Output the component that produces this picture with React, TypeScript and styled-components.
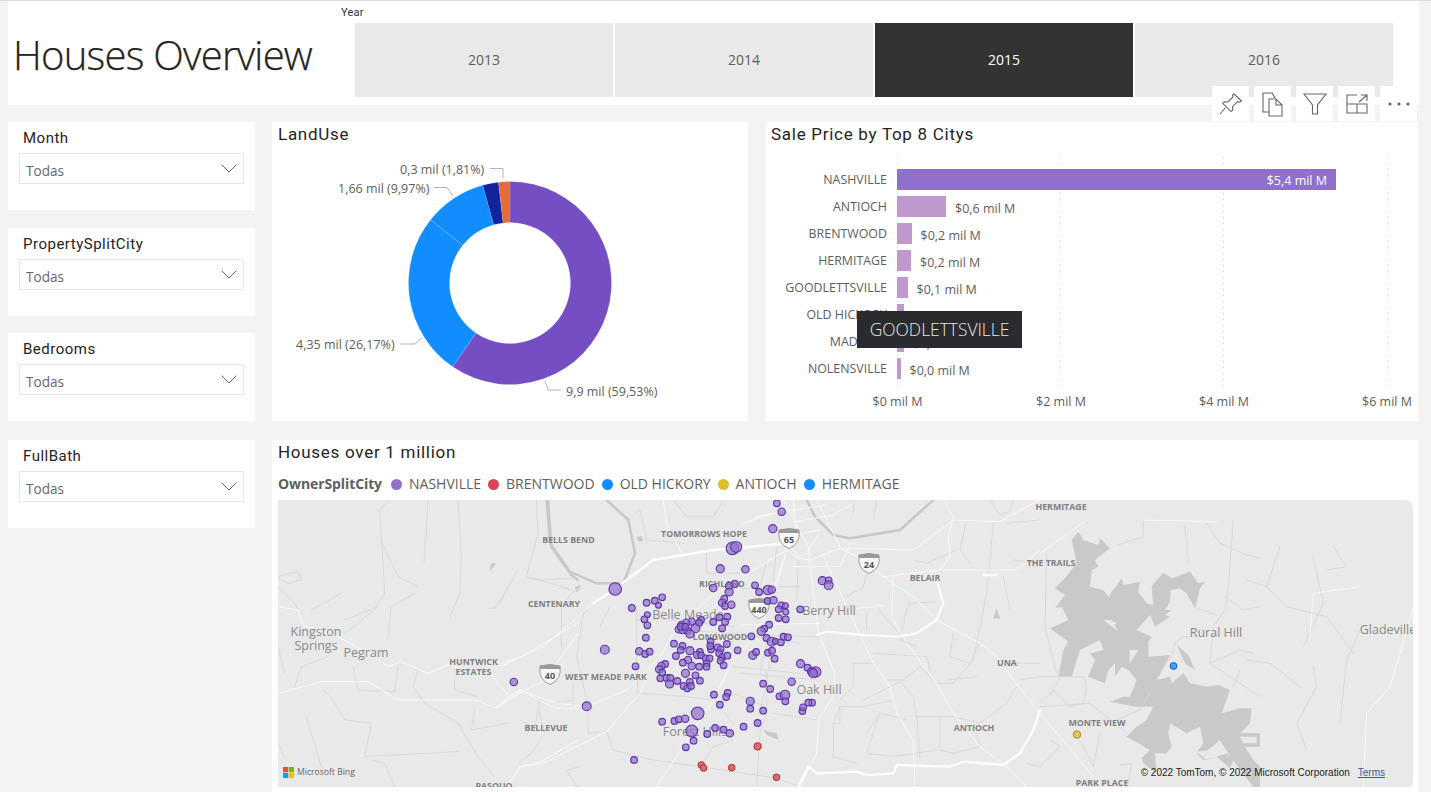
import React from 'react';
import styled, { createGlobalStyle } from 'styled-components';

const Global = createGlobalStyle`
  html, body { margin: 0; padding: 0; background: #f3f3f3; }
  body { width: 1431px; height: 792px; overflow: hidden; font-family: "Open Sans", "Liberation Sans", sans-serif; }
`;

const Page = styled.div`
  width: 1431px; height: 792px; box-sizing: border-box; overflow: hidden;
  border-top: 1px solid #dcdcdc; padding-left: 8px; background: #f3f3f3;
  display: flex; flex-direction: column; gap: 17px;
`;
const Header = styled.header`
  width: 1411px; height: 104px; background: #fff; flex: none;
  display: flex; box-sizing: border-box; position: relative;
`;
const Title = styled.h1`
  margin: 29px 0 0 5px; width: 342px; font: 300 40px/50px "Open Sans", sans-serif; color: #252423; letter-spacing: -0.75px; white-space: nowrap; -webkit-text-stroke: .25px #252423;
`;
const YearBlock = styled.div`display: flex; flex-direction: column; margin-top: 4px;`;
const YearLabel = styled.div`font: 400 11px/15px "Roboto", sans-serif; color: #333; margin-left: -14px; height: 18px; letter-spacing: .2px;`;
const YearRow = styled.div`display: flex; gap: 2px;`;
const YearTile = styled.div<{ $on?: boolean }>`
  width: 258px; height: 74px; box-sizing: border-box; padding-top: 27px; text-align: center;
  font: 400 14px/20px "Open Sans", sans-serif;
  background: ${p => (p.$on ? '#333333' : '#e9e9e9')};
  color: ${p => (p.$on ? '#fff' : '#605e5c')};
`;
const Body = styled.div`display: flex; gap: 17px; flex: 1;`;
const FilterCol = styled.div`width: 247px; display: flex; flex-direction: column; flex: none;`;
const FilterCard = styled.div<{ $after: number }>`
  height: 88px; background: #fff; flex: none; margin-bottom: ${p => p.$after}px; box-sizing: border-box; padding: 7px 11px 0;
`;
const FilterTitle = styled.div`font: 400 15px/18px "Roboto", sans-serif; color: #252423; margin-left: 4px; letter-spacing: .5px;`;
const Drop = styled.div`
  margin-top: 6px; height: 31px; box-sizing: border-box; border: 1px solid #e6e6e6; padding: 4px 6px 0;
  display: flex; align-items: center; justify-content: space-between;
  font: 400 13.6px/20px "Open Sans", sans-serif; color: #666;
`;
const ChevronSvg = styled.svg`margin-top: -5px;`;
const Main = styled.div`width: 1146px; display: flex; flex-direction: column; gap: 19px; flex: none;`;
const TopRow = styled.div`display: flex; gap: 18px; height: 299px; flex: none;`;
const Card = styled.section<{ $w: number }>`
  width: ${p => p.$w}px; height: 100%; background: #fff; position: relative; flex: none; box-sizing: border-box; padding: 2px 6px 0 ${p => (p.$w > 500 ? 5 : 6)}px;
`;
const CardTitle = styled.h2`margin: 0; font: 400 17px/20px "Roboto", sans-serif; letter-spacing: .72px; color: #252423;`;
const ChartSvg = styled.svg`position: absolute; left: 0; top: 0;`;
const Rows = styled.div`margin-top: 25px; display: flex; flex-direction: column; gap: 6px; position: relative;`;
const Row = styled.div`display: flex; height: 21px; align-items: center;`;
const RowLabel = styled.div`width: 126px; padding-right: 10px; box-sizing: border-box; text-align: right; font: 400 12.4px/14px "Open Sans", sans-serif; color: #605e5c; white-space: nowrap;`;
const Bar = styled.div<{ $main?: boolean }>`
  height: 21px; background: ${p => (p.$main ? '#9170cb' : '#c198cd')}; position: relative; flex: none;
  display: flex; align-items: center; justify-content: flex-end; box-sizing: border-box;
`;
const InnerValue = styled.span`color: #fff; font: 400 12.5px/14px "Open Sans", sans-serif; margin: 3px 9px 0 0;`;
const Value = styled.span`margin-left: 9px; color: #605e5c; font: 400 12.5px/14px "Open Sans", sans-serif; margin-top: 4px; white-space: nowrap;`;
const Grid = styled.div<{ $x: number }>`
  position: absolute; left: ${p => p.$x}px; top: -12px; height: 233px; width: 1px;
  background: repeating-linear-gradient(to bottom, #cfcfcf 0 1px, transparent 1px 6px);
`;
const Axis = styled.div`margin: 15px 0 0 92px; position: relative; height: 18px; width: 560px;`;
const Tick = styled.span<{ $x: number }>`
  position: absolute; left: ${p => p.$x}px; transform: translateX(-50%); top: 0;
  font: 400 12.5px/16px "Open Sans", sans-serif; color: #605e5c; white-space: nowrap;
`;
const Tooltip = styled.div`
  position: absolute; left: 91px; top: 189px; width: 165px; height: 37px; background: #2a2b2e; color: #e6e6e6;
  font: 300 17.4px/37px "Open Sans", sans-serif; text-align: center; z-index: 3;
`;
const Toolbar = styled.div`position: absolute; right: 1px; top: -36px; display: flex; gap: 5px; z-index: 4;`;
const ToolBtn = styled.div`width: 37px; height: 35px; background: #fff; display: flex; align-items: center; justify-content: center; color: #666;`;
const MapCard = styled.section`
  height: 352px; background: #fff; box-sizing: border-box; padding: 2px 6px 5px; width: 1146px; flex: none;
`;
const Legend = styled.div`display: flex; align-items: center; height: 20px; margin-top: 12px; margin-bottom: 6px; font: 400 14px/20px "Open Sans", sans-serif; color: #605e5c; white-space: nowrap;`;
const LegendTitle = styled.b`font-weight: 700; color: #605e5c; margin-right: 9px; font-size: 14px; letter-spacing: -.1px;`;
const LegendItem = styled.span`display: flex; align-items: center; gap: 7px; margin-right: 7px;`;
const Dot = styled.i<{ $c: string }>`width: 11px; height: 11px; border-radius: 50%; background: ${p => p.$c}; display: block;`;
const MapBox = styled.div`
  width: 1135px; height: 287px; position: relative; overflow: hidden; background: #e9e9e9; border-top-right-radius: 8px; border-bottom-right-radius: 4px;
`;
const MapSvg = styled.svg`display: block;`;
const Bing = styled.div`position: absolute; left: 5px; bottom: 9px; display: flex; align-items: center; gap: 3px; font: 400 8.6px/12px "Open Sans", sans-serif; color: #666;`;
const Attribution = styled.div`position: absolute; right: 28px; bottom: 8px; font: 400 10px/12px "Liberation Sans", sans-serif; color: #222; white-space: nowrap; display: flex; gap: 8px;`;
const Terms = styled.span`color: #3b5aa0; text-decoration: underline;`;

const Chevron = () => (
  <ChevronSvg width="16" height="9" viewBox="0 0 16 9" fill="none" stroke="#666" strokeWidth="1"><path d="M.7.7 8 8l7.3-7.3" /></ChevronSvg>
);

const polar = (a: number, r: number) => {
  const t = (a - 90) * Math.PI / 180;
  return [510 + r * Math.cos(t), 283 + r * Math.sin(t)];
};
const slice = (from: number, to: number) => {
  const [R, r] = [101.5, 60.5];
  const a0 = from * 3.6; const a1 = to * 3.6;
  const big = a1 - a0 > 180 ? 1 : 0;
  const p = [polar(a0, R), polar(a1, R), polar(a1, r), polar(a0, r)].map(q => q.map(n => n.toFixed(2)).join(' '));
  return `M${p[0]}A${R} ${R} 0 ${big} 1 ${p[1]}L${p[2]}A${r} ${r} 0 ${big} 0 ${p[3]}Z`;
};
const slices: [number, number, string][] = [
  [0, 59.53, '#744ec2'], [59.53, 85.7, '#118dff'], [85.7, 95.67, '#118dff'], [95.67, 98.19, '#12239e'], [98.19, 100, '#e66c37'],
];
const donutLabels: [string, number, number, string][] = [
  ['0,3 mil (1,81%)', 400, 173.5, 'M490 168.5H503V178'],
  ['1,66 mil (9,97%)', 338, 192.5, 'M434 187.5H447L453 196'],
  ['4,35 mil (26,17%)', 296, 349, 'M400 344H415L422 338'],
  ['9,9 mil (59,53%)', 566, 395.5, 'M545 381L548 390H561'],
];

const bars = [
  ['NASHVILLE', 439, '$5,4 mil M'], ['ANTIOCH', 49, '$0,6 mil M'], ['BRENTWOOD', 14.5, '$0,2 mil M'], ['HERMITAGE', 14, '$0,2 mil M'],
  ['GOODLETTSVILLE', 10.5, '$0,1 mil M'], ['OLD HICKORY', 6.5, '$0,1 mil M'], ['MADISON', 6.5, '$0,1 mil M'], ['NOLENSVILLE', 3.5, '$0,0 mil M'],
] as [string, number, string][];

const purple: number[][] = [
[1370,190,9],[1383,215,10],[1359,266,11],[1250,325,17],[1260,321,15],[1217,386,11],[1285,388,10],[1198,444,10],[1256,432,10],[1241,438,10],[1241,456,11],[1311,436,9],[1322,456,9],[1346,450,13],[1356,449,10],
[933,447,17],[978,504,9],[1018,488,9],[1040,482,9],[1060,472,9],[1050,496,8],[1020,524,8],[1012,538,9],[1020,556,9],[1016,593,9],
[1228,476,9],[1222,488,10],[1230,498,9],[1247,494,10],[1236,530,9],[1215,532,9],[1230,546,9],[1198,546,9],[1222,565,9],
[1345,483,9],[1361,481,10],[1382,496,9],[1393,497,8],[1375,508,9],[1394,516,8],[1394,538,9],[1375,534,9],[1433,508,9],
[1493,422,11],[1510,421,9],[1510,436,12],
[1140,545,10],[1125,548,10],[1112,555,10],[1165,540,9],[1160,548,9],[1105,568,10],[1115,570,10],[1128,572,9],[1150,565,12],[1135,582,11],[1110,560,9],[1122,560,9],
[1301,589,9],[1349,554,9],[1336,566,9],[1328,574,11],[1342,594,9],[1356,605,12],[1366,604,8],[1381,607,9],[1388,590,9],[1400,592,9],
[1191,605,9],[1235,612,9],[1192,628,9],[1115,618,9],[1092,611,9],[1110,630,9],[1135,632,11],[1162,636,9],[1155,645,10],[1165,646,9],[1097,648,9],[1190,618,9],[1210,622,9],[1218,628,9],[1214,640,9],[1222,652,9],[1236,647,9],[1218,662,9],[1226,676,9],[1264,631,9],[1305,646,11],[1314,636,9],[1346,638,9],[1357,632,9],[1364,656,9],
[1130,660,10],[1116,668,9],[1140,678,10],[1160,680,9],[1178,655,9],[1188,655,9],[1180,670,9],[1180,680,9],
[905,629,12],[998,634,10],[1014,642,9],[1026,635,9],[988,679,9],
[1068,672,9],[1058,678,10],[1052,688,10],[1060,698,9],[1055,715,9],[1072,714,9],[1082,714,9],[1080,732,11],[1101,723,9],[1123,700,11],[1150,706,9],[1135,726,9],[1162,722,9],[1118,738,9],[1128,745,9],[1138,738,9],
[1434,671,11],[1453,683,9],[1465,695,12],[1475,696,14],[1468,700,12],
[1410,725,10],[1333,731,9],[1352,747,9],[1377,769,9],[1392,765,13],[1393,784,9],[1237,759,9],[1233,771,9],[1200,764,9],[1216,794,9],[1298,784,11],[1298,806,9],[1333,812,9],[1439,813,9],[1441,802,9],[1465,788,9],[1455,788,9],
[659,726,10],[856,799,12],[1156,820,17],[1060,845,9],[1093,843,9],[1105,838,9],[1122,836,10],[1140,873,16],[1182,882,9],[1203,864,9],[1226,869,9],[1243,880,10],[1280,860,9],[1318,849,9],[1145,902,9],[1124,922,9],[984,960,9],
];
const red: number[][] = [[1318,919,10],[1166,975,9],[1172,984,9],[1248,983,9],[1369,1012,9]];
const conv = (zx: number, zy: number) => [270 + zx / 2.703, 440 + zy / 3];

type Sheet = { x: number; y: number; grey: string[]; white: string[]; wide?: string[]; river?: string[]; fill?: string[] };
const sheets: Sheet[] = [
  { x: 278, y: 500,
    grey: ['M335 0L305 30L315 180L320 280L290 330L200 400','M450 0L445 100L438 185','M540 0L550 170L545 280L515 355','M310 125L360 230L420 260','M410 280L340 320L330 420','M0 230L60 215L70 240L30 250L0 235','M0 260L50 310L60 330','M190 280L100 330','M300 320L200 360','M775 0L780 100L745 230L790 240L880 235','M720 210L680 280L650 325L630 325','M420 510L405 560L440 610L540 670L600 770L650 830','M590 630L580 690L690 670','M225 500L240 570L350 575L360 500','M135 570L165 600L200 660L280 670L260 770L540 755','M0 440L20 520','M150 470L70 500L50 560','M85 650L130 800','M780 620L800 700L760 760L720 790','M885 550V620','M850 320V440','M530 540L530 570L600 590','M280 780L320 790L350 860','M0 730L20 770'],
    white: ['M0 320L60 330L75 375L180 410L280 465L330 500L370 485L450 520L510 495L640 525L695 590L730 570L800 610L840 625L900 625','M450 520L510 495L670 490L730 470L900 370','M655 620L790 545L835 490L900 400','M0 580L130 545L270 545L360 600L590 600L655 625L730 575','M690 860L725 800L790 785L900 720'],
    river: ['M810 0L820 140L880 225L900 240'],
    fill: ['640,190 655,190 635,215'],
  },
  { x: 500, y: 500,
    grey: ['M280 310L250 340L230 470L265 620L265 700L320 695L340 750L460 780L600 800L830 835L900 860','M410 320V490L415 590','M410 360H540L700 380','M540 390L700 400L900 430','M700 500L900 520','M240 260L215 280L200 300','M80 235L120 240L215 270','M30 250L0 310','M620 160V220L720 220','M120 600L105 680L80 700','M165 610L220 600','M240 800L200 810L230 860','M700 580L800 620V520','M800 640L780 700L770 860','M640 600L700 670','M405 40L420 30L440 120L550 130','M520 0L560 50L640 50L670 0','M60 660L120 690L200 680','M300 380L330 320','M600 800L640 740L700 720','M420 580L560 590L640 600','M800 430L780 520','M700 400L690 500','M900 260L780 260L800 180'],
    white: ['M20 860L60 800L130 790L320 695L420 580L440 530','M470 860L640 600L700 480L780 390L860 150','M490 0L500 70L550 170','M730 70L820 40','M880 0L890 130','M860 150L900 180','M0 610L60 570L170 610L260 620L380 570L480 470L530 380L640 285L720 235L860 150','M0 500L130 440L280 310'],
    wide: ['M280 310L340 270L460 180L640 150L860 130'],
    river: ['M140 0L150 130L210 215L290 250L370 250L405 160L385 60L320 0'],
    fill: ['790,690 830,700 835,720 800,705','410,110 425,108 430,122 415,125','225,260 245,255 230,278'],
  },
  { x: 740, y: 500,
    grey: ['M380 340V390','M410 320L500 430','M500 330L510 310L590 305','M640 400L630 470L690 490L720 430','M760 70L740 280L700 480L640 550L590 550','M340 490V560L300 600','M370 600L480 545L520 590L530 650L640 650L720 670','M300 620H370L460 600','M280 670L300 620','M280 670V770L350 790','M500 660L420 640L380 760L460 770L590 750','M600 650V750L640 760','M340 490H400','M400 460L560 470','M810 490H900','M720 670L800 610L830 560','M710 530L620 540','M900 530L840 540','M790 230L810 330','M750 0L780 45L810 35L820 0','M0 265H90','M240 410L0 405','M0 520L240 540','M100 430L60 640','M230 660L100 640','M110 140L100 240','M175 180L170 300','M380 220L370 260L320 290','M500 330L480 420L530 440','M560 470L570 510','M590 550L540 500L490 540L440 540','M680 60L660 150L690 190','M410 0L400 60','M340 0V40','M650 150L560 190L520 180','M900 60L800 70','M300 620V670L280 670','M530 650L540 780','M700 660L720 740L640 760','M420 640L380 700','M860 790L900 800','M820 180L900 190'],
    white: ['M205 150L235 400L285 520L280 590L235 660L230 760L180 860','M0 150L120 130L150 140','M300 145L520 150L640 60L780 65L860 20L900 0','M300 145L370 180L430 230L520 290L590 360L720 430L770 470L820 540L900 640','M430 230L600 210L830 210L900 150','M610 0L640 50L625 110L630 170L600 210','M250 170L330 340L400 490L450 560L470 640L520 720L525 860','M460 230L455 350L500 430L590 550L640 640L720 740L800 800L860 860','M0 375L240 370','M130 0L210 150','M230 0L300 140','M50 50L120 35L260 15','M20 70L50 50','M170 65L280 45L340 10','M190 100L240 90','M205 150L235 105','M350 325L430 318','M150 140L180 175L210 180L300 145','M135 170L110 260','M160 200H300L330 130'],
    wide: ['M175 860L205 800L230 820L350 815L380 825L460 820L470 795L630 800L670 785L790 795L840 760L880 690L900 630','M230 405L260 395L370 405L470 410L530 400L590 360L610 310L590 240','M730 225L770 225'],
    river: ['M200 0L225 50L280 105L330 115L480 90L580 0'],
    fill: ['770,325 780,355 760,355'],
  },
  { x: 1040, y: 520,
    grey: ['M0 470H130L140 500L130 550L90 560L40 510L0 550','M435 20L445 130','M310 0V50L235 75','M580 0L565 200L555 270L520 320L510 430L660 530','M500 10L540 70L620 105L660 115','M555 230L610 270L660 260','M20 100L15 320L50 460','M405 370L400 395L350 480','M405 370L430 350H450','M180 640L160 740','M0 740L60 680L30 660','M240 735L275 730L265 790','M0 560L150 550L260 640','M60 470L30 530','M230 600L300 570L330 520','M510 430L600 390L640 400','M580 500L600 450','M470 265L530 285','M160 740L130 680L110 650'],
    white: ['M0 580L160 770','M310 0L530 5','M0 100L140 0'],
    wide: [],
    fill: [
      '115,35 130,60 175,75 180,55 210,85 165,120 175,140 155,150 150,200 190,210 205,230 245,175 250,195 300,185 295,215 320,250 340,255 335,200 345,185 370,158 395,175 450,155 475,190 495,185 480,205 465,265 440,220 420,205 392,210 390,245 375,270 395,270 375,285 390,290 345,320 330,285 290,330 335,350 325,365 325,410 390,405 350,480 390,470 395,490 430,460 450,490 500,500 535,495 570,510 545,580 600,565 635,565 630,610 600,640 660,640 660,680 615,680 640,720 660,740 660,801 640,801 575,715 540,660 505,690 470,695 500,720 560,700 580,720 570,745 530,710 490,720 470,700 490,670 480,620 440,640 390,610 385,640 395,680 380,700 345,700 350,760 310,730 305,715 330,690 260,650 290,620 320,600 340,560 290,560 210,545 250,530 270,530 290,480 265,450 245,440 225,470 225,430 205,450 195,490 145,470 165,420 150,400 190,390 180,360 120,390 95,470 55,470 70,390 85,365 30,325 85,300 65,260 45,265 75,225 45,205 70,180 110,130 100,80 95,60',
      '410,375 445,405 465,450 435,430',
    ],
    river: [],
  },
];
const holes = ['190,300 235,335 215,300', '270,390 295,390 268,432', '600,650 650,650 650,670 610,670', '210,300 230,310 215,320'];
const eastGrey = ['M0 100L60 120L120 180L240 210L320 320','M100 0L60 120','M200 30L230 170L170 300','M0 340L70 350L160 420','M340 250L300 340L280 530','M260 0L300 60L240 70','M200 360L210 420L150 530L180 610'];
const eastWhite = ['M20 150L30 20L170 0','M330 60L290 200L260 300L190 380L180 610'];

const smallLabels: [string, number, number][] = [
  ['BELLS BEND', 568.5, 543], ['TOMORROWS HOPE', 704, 536.5], ['RICHLAND', 722, 587], ['CENTENARY', 554, 607], ['LONGWOOD', 720, 640],
  ['HUNTWICK', 473.5, 664.5], ['ESTATES', 473.5, 675], ['WEST MEADE PARK', 606, 680], ['BELLEVUE', 546, 731], ['PASOUO', 494, 789],
  ['HERMITAGE', 1061, 510], ['THE TRAILS', 1051, 565.5], ['BELAIR', 925, 580.5], ['UNA', 1007, 666], ['MONTE VIEW', 1097, 725.5], ['ANTIOCH', 974, 730.5], ['PARK PLACE', 1102, 785.5],
];
const bigLabels: [string, number, number][] = [
  ['Belle Meade', 688, 619], ['Berry Hill', 829, 614.5], ['Kingston', 316, 636], ['Springs', 316, 650], ['Pegram', 366, 657], ['Oak Hill', 819, 694], ['Forest Hills', 695, 736], ['Rural Hill', 1216, 636.5], ['Gladeville', 1388, 634],
];
const shields: [string, number, number][] = [['65', 789, 538], ['440', 759, 608], ['40', 550, 674], ['24', 869, 563]];

const MapDrawing = () => (
  <MapSvg width="1135" height="287" viewBox="278 500 1135 287">
    {sheets.map(s => (
      <g key={s.x} transform={`translate(${s.x} ${s.y}) scale(.3333)`} fill="none" strokeLinejoin="round" strokeLinecap="round">
        {(s.fill || []).map((p, i) => <polygon key={i} points={p} fill="#c9c9c9" />)}
        {s.x === 1040 && holes.map((p, i) => <polygon key={i} points={p} fill="#e9e9e9" />)}
        {s.grey.map((d, i) => <path key={i} d={d} stroke="#d6d6d6" strokeWidth="2.6" />)}
        {(s.river || []).map((d, i) => <path key={i} d={d} stroke="#c8c8c8" strokeWidth="7.5" />)}
        {s.white.map((d, i) => <path key={i} d={d} stroke="#f8f8f8" strokeWidth="3" />)}
        {(s.wide || []).map((d, i) => <path key={i} d={d} stroke="#fcfcfc" strokeWidth="7" />)}
      </g>
    ))}
    <g transform="translate(1240 520) scale(.3333)" fill="none" strokeLinejoin="round" strokeLinecap="round">
      {eastGrey.map((d, i) => <path key={i} d={d} stroke="#d6d6d6" strokeWidth="2.6" transform="translate(20 80)" />)}
      {eastWhite.map((d, i) => <path key={i} d={d} stroke="#f8f8f8" strokeWidth="3" transform="translate(190 200)" />)}
    </g>
    {shields.map(([t, x, y]) => (
      <g key={t} transform={`translate(${x} ${y})`}>
        <path d="M-10 -8Q0 -11 10 -8Q12 6 0 10.5Q-12 6 -10 -8Z" fill="#f7f7f7" stroke="#9a9a9a" strokeWidth="1" />
        <path d="M-10 -8Q0 -11 10 -8L10.3 -5H-10.3Z" fill="#9a9a9a" />
        <text x="0" y="4.5" textAnchor="middle" fontFamily="Open Sans, sans-serif" fontSize="9" fontWeight="700" fill="#555">{t}</text>
      </g>
    ))}
    {smallLabels.map(([t, x, y]) => (
      <text key={t + x} x={x} y={y} textAnchor="middle" fontFamily="Open Sans, sans-serif" fontSize="8.8" fontWeight="700" fill="#808080">{t}</text>
    ))}
    {bigLabels.map(([t, x, y]) => (
      <text key={t} x={x} y={y} textAnchor="middle" fontFamily="Open Sans, sans-serif" fontSize="12.5" fill="#8a8a8a">{t}</text>
    ))}
    {purple.map(([x, y, r], i) => {
      const [cx, cy] = conv(x, y);
      return <circle key={i} cx={cx} cy={cy} r={r / 2.7} fill="#9170cb" fillOpacity=".72" stroke="#5a35a8" strokeWidth="1.1" />;
    })}
    {red.map(([x, y, r], i) => {
      const [cx, cy] = conv(x, y);
      return <circle key={i} cx={cx} cy={cy} r={r / 2.7} fill="#dc6a72" stroke="#b02a35" strokeWidth="1" />;
    })}
    <circle cx="1173.5" cy="666" r="3.4" fill="#4f9df0" stroke="#0f5cc0" strokeWidth="1" />
    <circle cx="1077" cy="734.5" r="3.7" fill="#e3c768" stroke="#a68a1e" strokeWidth="1" />
  </MapSvg>
);

export default function App() {
  return (
    <Page>
      <Global />
      <Header>
        <Title>Houses Overview</Title>
        <YearBlock>
          <YearLabel>Year</YearLabel>
          <YearRow>
            {['2013', '2014', '2015', '2016'].map(y => <YearTile key={y} $on={y === '2015'}>{y}</YearTile>)}
          </YearRow>
        </YearBlock>
      </Header>
      <Body>
        <FilterCol>
          {[['Month', 18], ['PropertySplitCity', 17], ['Bedrooms', 19], ['FullBath', 0]].map(([t, a]) => (
            <FilterCard key={t} $after={a as number}>
              <FilterTitle>{t}</FilterTitle>
              <Drop>Todas<Chevron /></Drop>
            </FilterCard>
          ))}
        </FilterCol>
        <Main>
          <TopRow>
            <Card $w={476}>
              <CardTitle>LandUse</CardTitle>
              <ChartSvg width="476" height="299" viewBox="272 122 476 299">
                {slices.map(([a, b, c]) => <path key={a} d={slice(a, b)} fill={c} stroke="#fff" strokeOpacity=".25" strokeWidth=".5" />)}
                {donutLabels.map(([t, x, y, d]) => (
                  <g key={t}>
                    <path d={d} fill="none" stroke="#b3b3b3" strokeWidth="1" />
                    <text x={x} y={y} fontFamily="Open Sans, sans-serif" fontSize="12.5" fill="#605e5c">{t}</text>
                  </g>
                ))}
              </ChartSvg>
            </Card>
            <Card $w={652}>
              <Toolbar>
                <ToolBtn>
                  <svg width="26" height="26" viewBox="0 0 26 26" fill="none" stroke="#666" strokeWidth="1.1"><path d="M16 3l7.5 7-2 1.2-2-.6-5 5 .3 3.4-1.6 1.6-8.5-8.3 1.8-1.5 3.4.2 5-5-.4-2zM7.5 16.5 2 23" /></svg>
                </ToolBtn>
                <ToolBtn>
                  <svg width="24" height="26" viewBox="0 0 24 26" fill="none" stroke="#666" strokeWidth="1.1"><path d="M8 21H2V2h9l3 5M8 8h7l6 6v11H8zM15 8v6h6" /></svg>
                </ToolBtn>
                <ToolBtn>
                  <svg width="26" height="24" viewBox="0 0 26 24" fill="none" stroke="#666" strokeWidth="1.1"><path d="M2 2h22l-8.5 11v9h-5v-9z" /></svg>
                </ToolBtn>
                <ToolBtn>
                  <svg width="24" height="22" viewBox="0 0 24 22" fill="none" stroke="#666" strokeWidth="1.1"><path d="M12 2H2v18h20V11h-10v9M2 11h10M14 9l8-7M16 2h6v6" /></svg>
                </ToolBtn>
                <ToolBtn>
                  <svg width="24" height="6" viewBox="0 0 24 6" fill="#666"><circle cx="3" cy="3" r="1.6" /><circle cx="12" cy="3" r="1.6" /><circle cx="21" cy="3" r="1.6" /></svg>
                </ToolBtn>
              </Toolbar>
              <CardTitle>Sale Price by Top 8 Citys</CardTitle>
              <Rows>
                {[126, 289, 452, 616].map(x => <Grid key={x} $x={x} />)}
                {bars.map(([n, w, v], i) => (
                  <Row key={n}>
                    <RowLabel>{n}</RowLabel>
                    <Bar $main={i === 0} style={{ width: w }}>{i === 0 && <InnerValue>{v}</InnerValue>}</Bar>
                    {i > 0 && <Value>{v}</Value>}
                  </Row>
                ))}
              </Rows>
              <Tooltip>GOODLETTSVILLE</Tooltip>
              <Axis>
                {[[34.5, '$0 mil M'], [198, '$2 mil M'], [361, '$4 mil M'], [524, '$6 mil M']].map(([x, t]) => (
                  <Tick key={t} $x={x as number}>{t}</Tick>
                ))}
              </Axis>
            </Card>
          </TopRow>
          <MapCard>
            <CardTitle>Houses over 1 million</CardTitle>
            <Legend>
              <LegendTitle>OwnerSplitCity</LegendTitle>
              {[['NASHVILLE', '#9170cb'], ['BRENTWOOD', '#dc4451'], ['OLD HICKORY', '#118dff'], ['ANTIOCH', '#e0bc2f'], ['HERMITAGE', '#118dff']].map(([t, c]) => (
                <LegendItem key={t}><Dot $c={c} />{t}</LegendItem>
              ))}
            </Legend>
            <MapBox>
              <MapDrawing />
              <Bing>
                <svg width="11" height="11" viewBox="0 0 11 11"><path fill="#f25022" d="M0 0h5.2v5.2H0z" /><path fill="#7fba00" d="M5.8 0H11v5.2H5.8z" /><path fill="#00a4ef" d="M0 5.8h5.2V11H0z" /><path fill="#ffb900" d="M5.8 5.8H11V11H5.8z" /></svg>
                Microsoft Bing
              </Bing>
              <Attribution>© 2022 TomTom, © 2022 Microsoft Corporation<Terms>Terms</Terms></Attribution>
            </MapBox>
          </MapCard>
        </Main>
      </Body>
    </Page>
  );
}
